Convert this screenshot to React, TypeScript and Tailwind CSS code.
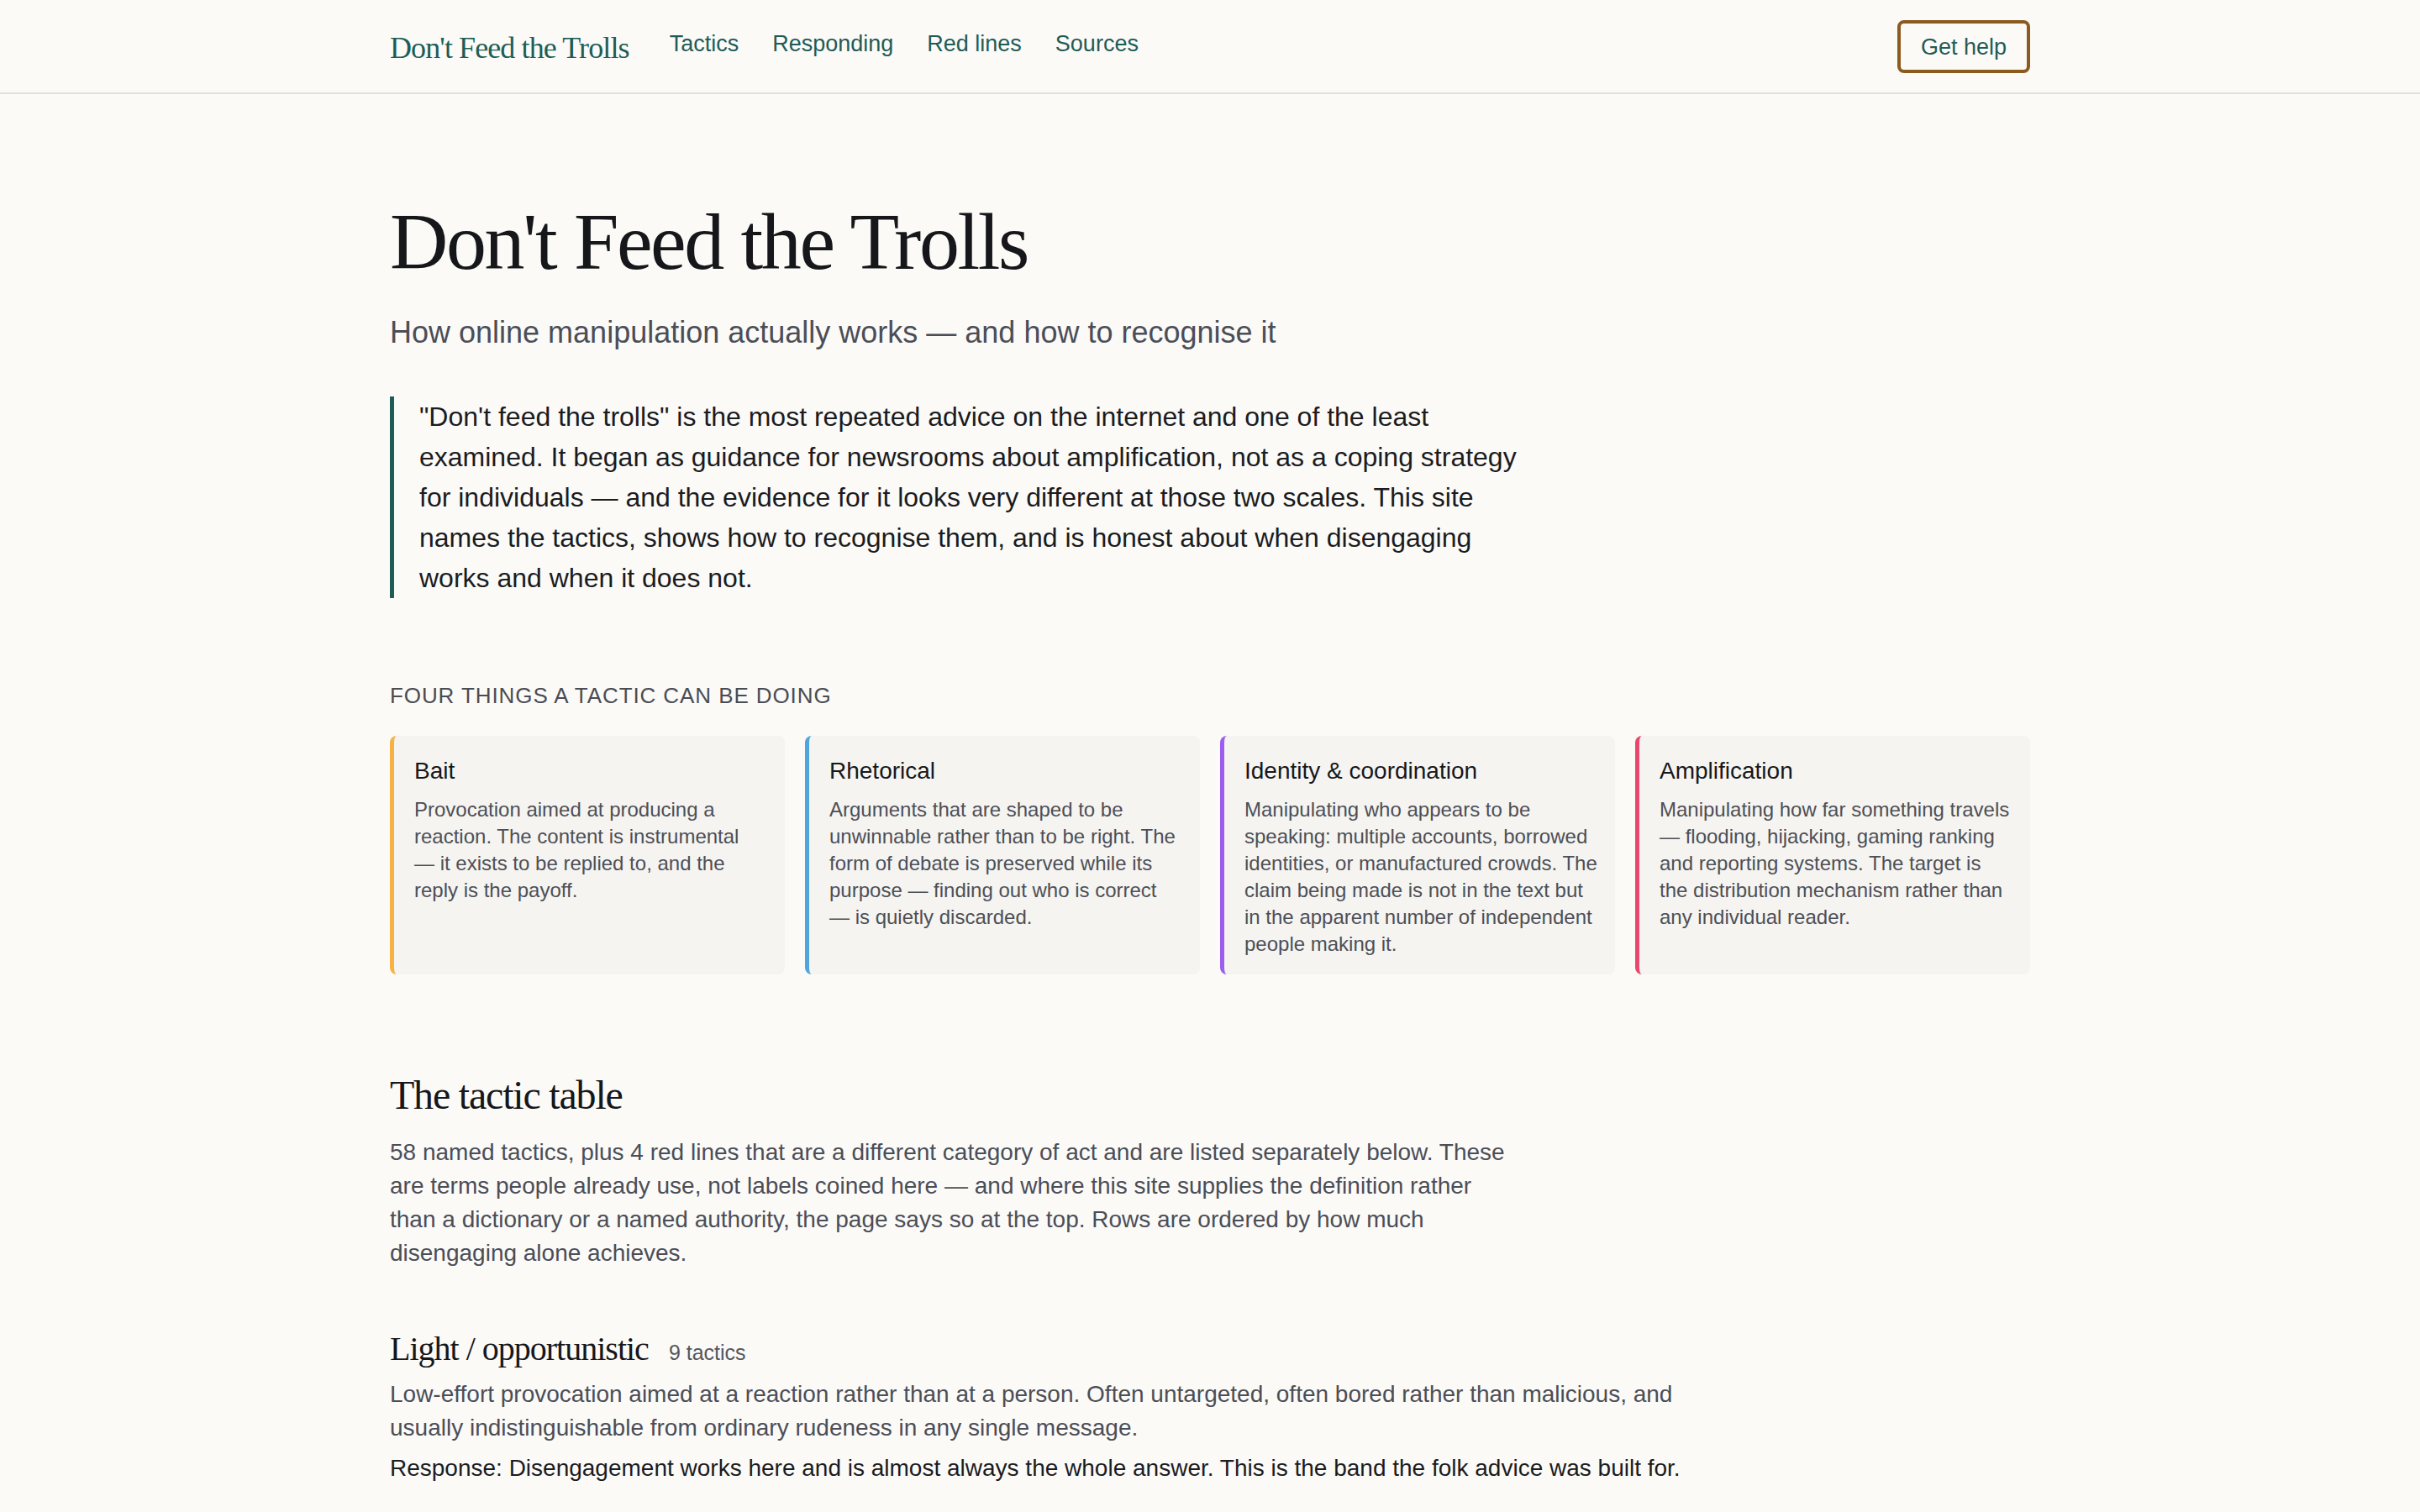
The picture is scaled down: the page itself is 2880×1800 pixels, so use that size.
import React from 'react';

interface Category {
  title: string;
  body: string;
  accent: string;
}

// em dashes keep the following word with them (non-breaking space after the dash)
const categories: Category[] = [
  {
    title: 'Bait',
    body: 'Provocation aimed at producing a reaction. The content is instrumental —\u00a0it exists to be replied to, and the reply is the payoff.',
    accent: 'border-l-[#f6b344]',
  },
  {
    title: 'Rhetorical',
    body: 'Arguments that are shaped to be unwinnable rather than to be right. The form of debate is preserved while its purpose —\u00a0finding out who is correct —\u00a0is quietly discarded.',
    accent: 'border-l-[#4ea6dc]',
  },
  {
    title: 'Identity & coordination',
    body: 'Manipulating who appears to be speaking: multiple accounts, borrowed identities, or manufactured crowds. The claim being made is not in the text but in the apparent number of independent people making it.',
    accent: 'border-l-[#9d5ef0]',
  },
  {
    title: 'Amplification',
    body: 'Manipulating how far something travels —\u00a0flooding, hijacking, gaming ranking and reporting systems. The target is the distribution mechanism rather than any individual reader.',
    accent: 'border-l-[#e8486e]',
  },
];

const navLinks = ['Tactics', 'Responding', 'Red lines', 'Sources'];

const intro =
  '"Don\'t feed the trolls" is the most repeated advice on the internet and one of the least examined. It began as guidance for newsrooms about amplification, not as a coping strategy for individuals —\u00a0and the evidence for it looks very different at those two scales. This site names the tactics, shows how to recognise them, and is honest about when disengaging works and when it does not.';

const tableIntro =
  '58 named tactics, plus 4 red lines that are a different category of act and are listed separately below. These are terms people already use, not labels coined here —\u00a0and where this site supplies the definition rather than a dictionary or a named authority, the page says so at the top. Rows are ordered by how much disengaging alone achieves.';

const serif = "font-['Liberation_Serif','Times_New_Roman',serif]";

const Header: React.FC = () => (
  <header className="border-b-2 border-[#e4e0d7]">
    <div className="mx-auto flex h-[110px] max-w-[2048px] items-center justify-between px-12">
      <div className="flex items-center gap-12">
        <a href="#" className={`${serif} pt-[4px] text-[36px] leading-14 tracking-tight text-[#1e5d57]`}>
          Don't Feed the Trolls
        </a>
        <nav className="flex items-center gap-10">
          {navLinks.map((link) => (
            <a key={link} href="#" className="pb-[6px] text-[27px] leading-10 text-[#1f5c57]">
              {link}
            </a>
          ))}
        </nav>
      </div>
      <a
        href="#"
        className="rounded-lg border-4 border-[#8b5a1f] px-6 pt-[8px] pb-[7px] text-[27px] leading-10 text-[#1f5c57]"
      >
        Get help
      </a>
    </div>
  </header>
);

const CategoryCard: React.FC<{ category: Category }> = ({ category }) => (
  <div className={`rounded-lg border-l-[5px] ${category.accent} bg-[#f5f4f0] pt-6 pr-[19px] pb-5 pl-6`}>
    <h3 className="text-[28px] leading-9 text-[#17181c]">{category.title}</h3>
    <p className="mt-3 text-2xl leading-[32px] text-[#4d4f57]">{category.body}</p>
  </div>
);

export default function App() {
  return (
    <div className="min-h-screen bg-[#fbfaf7] font-['Liberation_Sans',Arial,sans-serif]">
      <Header />
      <main className="mx-auto max-w-[2048px] px-12 pt-32 pb-40">
        <h1 className={`${serif} text-8xl leading-none tracking-tight text-[#16171b]`}>
          Don't Feed the Trolls
        </h1>
        <p className="mt-8 text-4xl leading-14 text-[#4b4e57]">
          {'How online manipulation actually works —\u00a0and how to recognise it'}
        </p>

        <blockquote className="mt-12 max-w-[1344px] border-l-[5px] border-[#1f5c57] pl-[30px] text-[32px] leading-12 text-[#1b1c1f]">
          {intro}
        </blockquote>

        <section className="mt-24">
          <h2 className="text-[26px] leading-10 tracking-[0.035em] text-[#4a4c53] uppercase">
            Four things a tactic can be doing
          </h2>
          <div className="mt-7 grid grid-cols-4 gap-6">
            {categories.map((category) => (
              <CategoryCard key={category.title} category={category} />
            ))}
          </div>
        </section>

        <section className="mt-[112px]">
          <h2 className={`${serif} text-5xl leading-16 tracking-tight text-[#16171b]`}>
            The tactic table
          </h2>
          <p className="mt-4 max-w-[1344px] text-[28px] leading-10 text-[#4b4e57]">{tableIntro}</p>

          <div className="mt-[66px]">
            <div className="flex items-baseline gap-6">
              <h3 className={`${serif} text-[40px] leading-14 tracking-tight text-[#16171b]`}>
                Light / opportunistic
              </h3>
              <span className="text-[25px] text-[#55575e]">9 tactics</span>
            </div>
            <p className="mt-1.5 max-w-[1536px] text-[28px] leading-10 text-[#4b4e57]">
              Low-effort provocation aimed at a reaction rather than at a person. Often untargeted,
              often bored rather than malicious, and usually indistinguishable from ordinary rudeness
              in any single message.
            </p>
            <p className="mt-2 text-[28px] leading-10 text-[#1b1c1f]">
              Response: Disengagement works here and is almost always the whole answer. This is the
              band the folk advice was built for.
            </p>
          </div>
        </section>
      </main>
    </div>
  );
}
